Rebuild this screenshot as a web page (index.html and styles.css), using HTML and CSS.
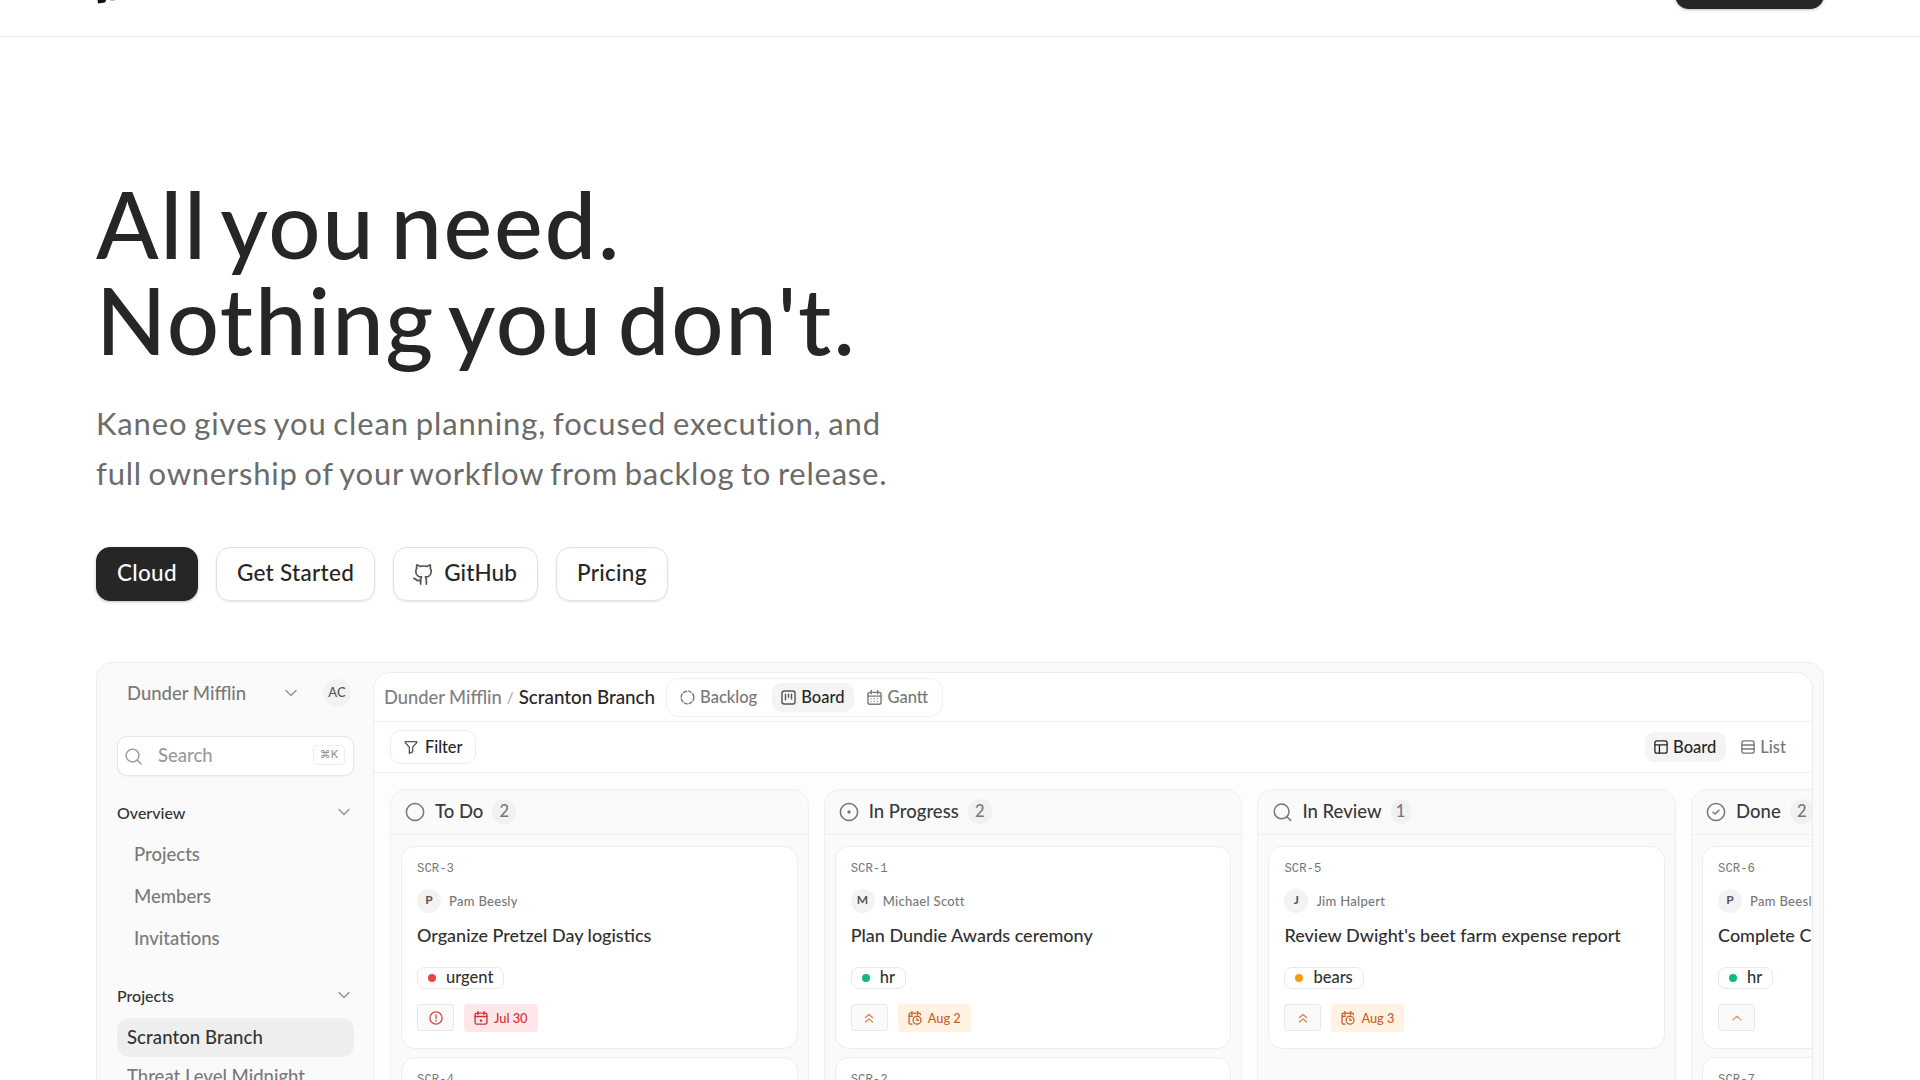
FILE: index.html
```
<!DOCTYPE html>
<html lang="en">
  <head>
    <meta charset="UTF-8" />
    <meta name="viewport" content="width=device-width, initial-scale=1.0" />
    <title>Kaneo</title>
    <link rel="stylesheet" href="styles.css">
  </head>
  <body>
    <svg class="sprite">
      <symbol id="chevron" viewBox="0 0 12 8"><path d="M1 1.5l5 5 5-5" /></symbol>
      <symbol id="search" viewBox="0 0 18 18"><circle cx="8" cy="8" r="6.8" /><path d="M13 13l4 4" /></symbol>
      <symbol id="github" viewBox="0 0 24 24"><path d="M15 22v-4a4.8 4.8 0 0 0-1-3.5c3 0 6-2 6-5.5.08-1.25-.27-2.48-1-3.5.28-1.15.28-2.35 0-3.5 0 0-1 0-3 1.5-2.64-.5-5.36-.5-8 0C6 2 5 2 5 2c-.3 1.15-.3 2.35 0 3.5A5.4 5.4 0 0 0 4 9c0 3.5 3 5.5 6 5.5-.39.49-.68 1.05-.85 1.65S8.93 17.38 9 18v4" /><path d="M9 18c-4.51 2-5-2-7-2" /></symbol>
      <symbol id="dashed" viewBox="0 0 16 16"><circle cx="8" cy="8" r="6.8" stroke-dasharray="3.3 2.04" /></symbol>
      <symbol id="kanban" viewBox="0 0 16 16"><rect x="1" y="1" width="14" height="14" rx="2.5" /><path d="M4.8 4.5v6M8 4.5v3.2M11.2 4.5v5" /></symbol>
      <symbol id="calendar" viewBox="0 0 16 16"><rect x="1" y="2.5" width="14" height="12.7" rx="2.2" /><path d="M4.5.5v3.5M11.5.5v3.5M1 6.5h14" /><path class="grid" d="M4 9.5h8M4 12.3h8" stroke-dasharray=".6 2.8" /></symbol>
      <symbol id="filter" viewBox="0 0 16 16"><path d="M1.5 1.8h13v1.4l-4.6 5v5.3l-3.8 1.7V8.2l-4.6-5z" /></symbol>
      <symbol id="layout" viewBox="0 0 16 16"><rect x="1" y="1" width="14" height="14" rx="2.5" /><path d="M1 5.5h14M6.2 5.5V15" /></symbol>
      <symbol id="list" viewBox="0 0 16 16"><rect x="1" y="1" width="14" height="14" rx="2.5" /><path d="M1 5.7h14M1 10.3h14" /></symbol>
      <symbol id="todo" viewBox="0 0 20 20"><circle cx="10" cy="10" r="8.6" /></symbol>
      <symbol id="progress" viewBox="0 0 20 20"><circle cx="10" cy="10" r="8.6" /><circle cx="10" cy="10" r=".9" /></symbol>
      <symbol id="review" viewBox="0 0 20 20"><circle cx="9.6" cy="9.4" r="7.4" /><path d="M15 14.8l3.6 3.6" /></symbol>
      <symbol id="done" viewBox="0 0 20 20"><circle cx="10" cy="10" r="8.6" /><path d="M7 10.2l2 1.8 4-3.6" /></symbol>
      <symbol id="alert" viewBox="0 0 16 16"><circle cx="8" cy="8" r="7" /><path d="M8 4.6v4M8 10.8v.7" /></symbol>
      <symbol id="double-up" viewBox="0 0 16 16"><path d="M4 7.5L8 4l4 3.5M4 12.5L8 9l4 3.5" /></symbol>
      <symbol id="up" viewBox="0 0 16 16"><path d="M3.2 10.2L8 6l4.8 4.2" /></symbol>
      <symbol id="due" viewBox="0 0 16 16"><rect x="1.2" y="2.4" width="13.6" height="12.6" rx="2" /><path d="M4.5.6v3.4M11.5.6v3.4M1.2 6.3h13.6M7.4 10.4h1.2v1H7.4z" /></symbol>
      <symbol id="due-soon" viewBox="0 0 16 16"><path d="M4.5 15H3a1.8 1.8 0 0 1-1.8-1.8v-9A1.8 1.8 0 0 1 3 2.4h9.5a1.8 1.8 0 0 1 1.8 1.8M4.5.6v3.4M11 .6v3.4M1.2 6h4" /><circle cx="10.3" cy="10.5" r="4.5" /><path d="M10.3 8.6v2.2h1.6" /></symbol>
    </svg>

    <header class="header">
      <svg class="logo" viewBox="0 0 22 4"><path d="M.6 0h8.6L8 2.6 1 3.6z" /><path class="faint" d="M13 0h5v.9h-5z" /></svg>
      <div class="header-btn"></div>
    </header>

    <main class="hero">
      <h1 class="hero-title">All you need.<br>Nothing you don't.</h1>
      <p class="hero-text">Kaneo gives you clean planning, focused execution, and<br><span class="second">full ownership of your workflow from backlog to release.</span></p>
      <div class="actions">
        <a class="btn btn-dark">Cloud</a>
        <a class="btn">Get Started</a>
        <a class="btn btn-icon"><svg><use href="#github" /></svg>GitHub</a>
        <a class="btn">Pricing</a>
      </div>

      <div class="app">
        <aside class="sidebar">
          <div class="workspace">
            <span>Dunder Mifflin</span>
            <svg class="chevron"><use href="#chevron" /></svg>
            <span class="user">AC</span>
          </div>
          <div class="search">
            <svg><use href="#search" /></svg>
            <span>Search</span>
            <kbd>⌘K</kbd>
          </div>
          <div class="group">Overview <svg class="chevron"><use href="#chevron" /></svg></div>
          <nav class="overview">
            <a>Projects</a>
            <a>Members</a>
            <a>Invitations</a>
          </nav>
          <div class="group">Projects <svg class="chevron"><use href="#chevron" /></svg></div>
          <nav class="projects">
            <a class="active">Scranton Branch</a>
            <a>Threat Level Midnight</a>
          </nav>
        </aside>

        <section class="panel">
          <div class="topbar">
            <span class="crumb">Dunder Mifflin</span>
            <span class="slash">/</span>
            <span class="crumb current">Scranton Branch</span>
            <div class="tabs">
              <span class="tab"><svg><use href="#dashed" /></svg>Backlog</span>
              <span class="tab selected"><svg><use href="#kanban" /></svg>Board</span>
              <span class="tab"><svg><use href="#calendar" /></svg>Gantt</span>
            </div>
          </div>
          <div class="toolbar">
            <span class="filter"><svg><use href="#filter" /></svg>Filter</span>
            <div class="views">
              <span class="view selected"><svg><use href="#layout" /></svg>Board</span>
              <span class="view"><svg><use href="#list" /></svg>List</span>
            </div>
          </div>

          <div class="board">
            <div class="column">
              <div class="column-head"><svg><use href="#todo" /></svg>To Do <span class="count">2</span></div>
              <div class="cards">
                <article class="card">
                  <div class="card-id">SCR-3</div>
                  <div class="assignee"><span class="avatar">P</span>Pam Beesly</div>
                  <h3>Organize Pretzel Day logistics</h3>
                  <span class="tag"><i class="dot red"></i>urgent</span>
                  <div class="chips">
                    <span class="priority urgent"><svg><use href="#alert" /></svg></span>
                    <span class="date overdue"><svg><use href="#due" /></svg>Jul 30</span>
                  </div>
                </article>
                <article class="card">
                  <div class="card-id">SCR-4</div>
                </article>
              </div>
            </div>

            <div class="column">
              <div class="column-head"><svg><use href="#progress" /></svg>In Progress <span class="count">2</span></div>
              <div class="cards">
                <article class="card">
                  <div class="card-id">SCR-1</div>
                  <div class="assignee"><span class="avatar">M</span>Michael Scott</div>
                  <h3>Plan Dundie Awards ceremony</h3>
                  <span class="tag"><i class="dot green"></i>hr</span>
                  <div class="chips">
                    <span class="priority high"><svg><use href="#double-up" /></svg></span>
                    <span class="date soon"><svg><use href="#due-soon" /></svg>Aug 2</span>
                  </div>
                </article>
                <article class="card">
                  <div class="card-id">SCR-2</div>
                </article>
              </div>
            </div>

            <div class="column">
              <div class="column-head"><svg><use href="#review" /></svg>In Review <span class="count narrow">1</span></div>
              <div class="cards">
                <article class="card">
                  <div class="card-id">SCR-5</div>
                  <div class="assignee"><span class="avatar">J</span>Jim Halpert</div>
                  <h3>Review Dwight's beet farm expense report</h3>
                  <span class="tag"><i class="dot orange"></i>bears</span>
                  <div class="chips">
                    <span class="priority high"><svg><use href="#double-up" /></svg></span>
                    <span class="date soon"><svg><use href="#due-soon" /></svg>Aug 3</span>
                  </div>
                </article>
              </div>
            </div>

            <div class="column">
              <div class="column-head"><svg><use href="#done" /></svg>Done <span class="count">2</span></div>
              <div class="cards">
                <article class="card">
                  <div class="card-id">SCR-6</div>
                  <div class="assignee"><span class="avatar">P</span>Pam Beesly</div>
                  <h3>Complete C</h3>
                  <span class="tag"><i class="dot green"></i>hr</span>
                  <div class="chips">
                    <span class="priority medium"><svg><use href="#up" /></svg></span>
                  </div>
                </article>
                <article class="card">
                  <div class="card-id">SCR-7</div>
                </article>
              </div>
            </div>
          </div>
        </section>
      </div>
    </main>
  </body>
</html>
```

FILE: styles.css
```
* {
  margin: 0;
  padding: 0;
  box-sizing: border-box;
}
body {
  height: 1080px;
  overflow: hidden;
  font-family: Lato, "Liberation Sans", sans-serif;
  font-weight: 500;
  color: #262626;
  background: #fff;
}
svg {
  display: block;
  flex: none;
  fill: none;
  stroke: currentColor;
  stroke-width: 1.5;
  stroke-linecap: round;
  stroke-linejoin: round;
}
.sprite {
  display: none;
}
.grid {
  stroke-width: 0.9;
}

/* header */
.header {
  height: 37px;
  padding: 0 96px;
  display: flex;
  justify-content: space-between;
  border-bottom: 1px solid #e9e9e9;
}
.logo {
  width: 22px;
  height: 4px;
  margin-left: 1px;
  fill: #111;
  stroke: none;
}
.logo .faint {
  fill: #bbb;
}
.header-btn {
  width: 149px;
  height: 54px;
  margin-top: -45px;
  border-radius: 14px;
  background: #262626;
  box-shadow: 0 1px 3px rgba(0, 0, 0, 0.25);
}

/* hero */
.hero {
  height: 1043px;
  padding: 139px 96px 0;
  overflow: hidden;
}
.hero-title {
  font-size: 92px;
  font-weight: 500;
  line-height: 96px;
  letter-spacing: 1.7px;
  word-spacing: -10px;
}
.hero-text {
  margin-top: 31px;
  font-size: 31px;
  font-weight: 400;
  line-height: 49.5px;
  letter-spacing: 0.87px;
  word-spacing: -2px;
  color: #6b6b6b;
}
.second {
  letter-spacing: 0.77px;
}
.actions {
  display: flex;
  gap: 18px;
  margin-top: 49px;
}
.btn {
  height: 54px;
  padding: 0 20px 3px;
  display: flex;
  align-items: center;
  border: 1px solid #e2e2e2;
  border-radius: 14px;
  font-size: 22.5px;
  letter-spacing: 0.3px;
  box-shadow: 0 1px 2px rgba(0, 0, 0, 0.12);
}
.btn-dark {
  color: #fafafa;
  background: #262626;
  border-color: #262626;
  box-shadow: 0 1px 3px rgba(0, 0, 0, 0.25);
}
.btn-icon {
  letter-spacing: 0.1px;
}
.btn svg {
  width: 23px;
  height: 23px;
  margin: 4px 9px 0 -2px;
  color: #555;
  stroke-width: 1.8;
}

/* app preview */
.app {
  height: 700px;
  margin-top: 61px;
  display: flex;
  padding-right: 10px;
  border: 1px solid #eee;
  border-radius: 16px;
  background: #fafafa;
}
.sidebar {
  width: 276px;
  flex: none;
  padding: 16px 19px 0 20px;
  font-size: 18.5px;
  color: #7a7a7a;
}
.chevron {
  width: 12px;
  height: 8px;
  color: #999;
}
.workspace {
  display: flex;
  align-items: center;
  height: 28px;
  padding: 0 3px 0 10px;
}
.workspace .chevron {
  margin-left: auto;
  margin-right: 26px;
}
.user {
  width: 28px;
  height: 28px;
  border-radius: 50%;
  background: #f2f2f2;
  font-size: 13px;
  line-height: 27px;
  text-align: center;
  color: #555;
}
.search {
  height: 40px;
  margin-top: 29px;
  padding: 0 8px 0 7px;
  display: flex;
  align-items: center;
  border: 1px solid #e6e6e6;
  border-radius: 10px;
  background: #fff;
  color: #999;
  box-shadow: 0 1px 2px rgba(0, 0, 0, 0.05);
}
.search svg {
  width: 17px;
  height: 17px;
  margin-right: 16px;
}
.search span {
  padding-bottom: 3px;
}
.search kbd {
  height: 20px;
  width: 32px;
  margin: 0 0 2px auto;
  border: 1px solid #eee;
  border-radius: 4px;
  font: 500 11px/16px Inter, "DejaVu Sans", sans-serif;
  text-align: center;
}
.group {
  height: 24px;
  margin-top: 24px;
  padding-right: 4px;
  display: flex;
  align-items: center;
  justify-content: space-between;
  font-size: 16px;
  color: #333;
}
.overview {
  margin-top: 9px;
  padding-left: 17px;
}
.overview a {
  display: block;
  line-height: 42px;
}
.projects {
  margin-top: 11px;
}
.projects a {
  display: block;
  height: 39px;
  padding-left: 10px;
  line-height: 38px;
}
.projects .active {
  border-radius: 12px;
  background: #eee;
  color: #333;
  letter-spacing: 0.1px;
}
.panel {
  flex: 1;
  min-width: 0;
  margin-top: 9px;
  border: 1px solid #ededed;
  border-radius: 18px;
  overflow: hidden;
  background: #fff;
}
.topbar {
  height: 49px;
  padding: 0 11px 0 10px;
  display: flex;
  align-items: center;
  border-bottom: 1px solid #eee;
  font-size: 18.3px;
}
.crumb {
  padding-bottom: 1px;
  color: #808080;
}
.crumb.current {
  color: #262626;
  font-size: 18.8px;
}
.slash {
  margin: 0 5px;
  font-size: 15px;
  color: #aaa;
}
.tabs {
  height: 39px;
  margin-left: 11px;
  padding: 0 4px;
  display: flex;
  align-items: center;
  border: 1px solid #f0f0f0;
  border-radius: 13px;
}
.tab,
.view {
  height: 29px;
  padding: 0 10px 1px 9px;
  display: flex;
  align-items: center;
  gap: 5px;
  border-radius: 9px;
  font-size: 16.5px;
  color: #777;
}
.tab svg,
.view svg {
  width: 15px;
  height: 15px;
  margin-top: 1px;
}
.selected {
  background: #f4f4f4;
  color: #262626;
}
.tab.selected {
  margin: 0 4px 0 5px;
}
.tab.selected svg {
  color: #555;
}
.toolbar {
  height: 51px;
  padding: 0 16px;
  display: flex;
  align-items: center;
  justify-content: space-between;
  border-bottom: 1px solid #eee;
}
.filter {
  height: 34px;
  padding: 0 13px 1px 13px;
  display: flex;
  align-items: center;
  gap: 7px;
  border: 1px solid #ededed;
  border-radius: 10px;
  font-size: 16.3px;
}
.filter svg {
  width: 14px;
  height: 14px;
  color: #555;
}
.views {
  display: flex;
  gap: 6px;
}
.view {
  height: 30px;
}
.view svg {
  width: 14px;
  height: 14px;
}

/* board */
.board {
  height: 600px;
  display: flex;
  gap: 15px;
  padding: 16px 16px 0;
  background: #fdfdfd;
}
.column {
  width: 418.7px;
  flex: none;
  border: 1px solid #efefef;
  border-radius: 16px;
  background: #fafafa;
}
.column-head {
  height: 45px;
  padding: 0 15px 2px;
  display: flex;
  align-items: center;
  border-bottom: 1px solid #efefef;
  font-size: 18.5px;
  color: #3a3a3a;
}
.column-head svg {
  width: 20px;
  height: 20px;
  margin: 2px 10px 0 -1px;
  color: #777;
}
.count {
  height: 25px;
  min-width: 24px;
  margin: 1px 0 0 9px;
  padding: 0 7px;
  border-radius: 13px;
  background: #f1f1f1;
  font-size: 16.5px;
  line-height: 24px;
  text-align: center;
  color: #777;
}
.count.narrow {
  min-width: 20px;
  padding: 0 5px;
}
.cards {
  display: flex;
  flex-direction: column;
  gap: 8px;
  padding: 11px 10px;
}
.card {
  height: 203px;
  padding: 14px 15px;
  border: 1px solid #ededed;
  border-radius: 14px;
  background: #fff;
}
.card-id {
  font: 12.3px/16px "Liberation Mono", monospace;
  color: #777;
}
.assignee {
  height: 24px;
  margin-top: 12px;
  display: flex;
  align-items: center;
  gap: 8px;
  font-size: 13px;
  letter-spacing: 0.3px;
  color: #777;
}
.avatar {
  width: 24px;
  height: 24px;
  border-radius: 50%;
  background: #f3f3f3;
  font-size: 12px;
  font-weight: 700;
  line-height: 22px;
  text-align: center;
  color: #555;
}
.card h3 {
  margin-top: 10px;
  font-size: 18px;
  font-weight: 500;
  line-height: 24px;
  white-space: nowrap;
  color: #303030;
}
.tag {
  width: fit-content;
  height: 22px;
  margin-top: 20px;
  padding: 0 10px 2px;
  display: flex;
  align-items: center;
  gap: 10px;
  border: 1px solid #e8e8e8;
  border-radius: 8px;
  font-size: 16.5px;
  color: #333;
}
.dot {
  width: 8px;
  height: 8px;
  margin-top: 2px;
  border-radius: 50%;
}
.red {
  background: #ef4444;
}
.green {
  background: #10b981;
}
.orange {
  background: #f59e0b;
}
.chips {
  margin-top: 15px;
  display: flex;
  gap: 10px;
}
.priority {
  width: 37px;
  height: 27px;
  display: flex;
  align-items: center;
  justify-content: center;
  border: 1px solid #e8e8e8;
  border-radius: 3px;
  background: #fafafa;
}
.priority svg,
.date svg {
  width: 14px;
  height: 14px;
}
.urgent {
  color: #e0454d;
}
.high {
  color: #d98252;
}
.medium {
  color: #e0a070;
}
.date {
  height: 28px;
  padding: 0 10px;
  display: flex;
  align-items: center;
  gap: 6px;
  border-radius: 4px;
  font-size: 12.8px;
}
.overdue {
  background: #ffe6e8;
  color: #cf2f3a;
}
.soon {
  background: #fff2e2;
  color: #c8622d;
}
```
